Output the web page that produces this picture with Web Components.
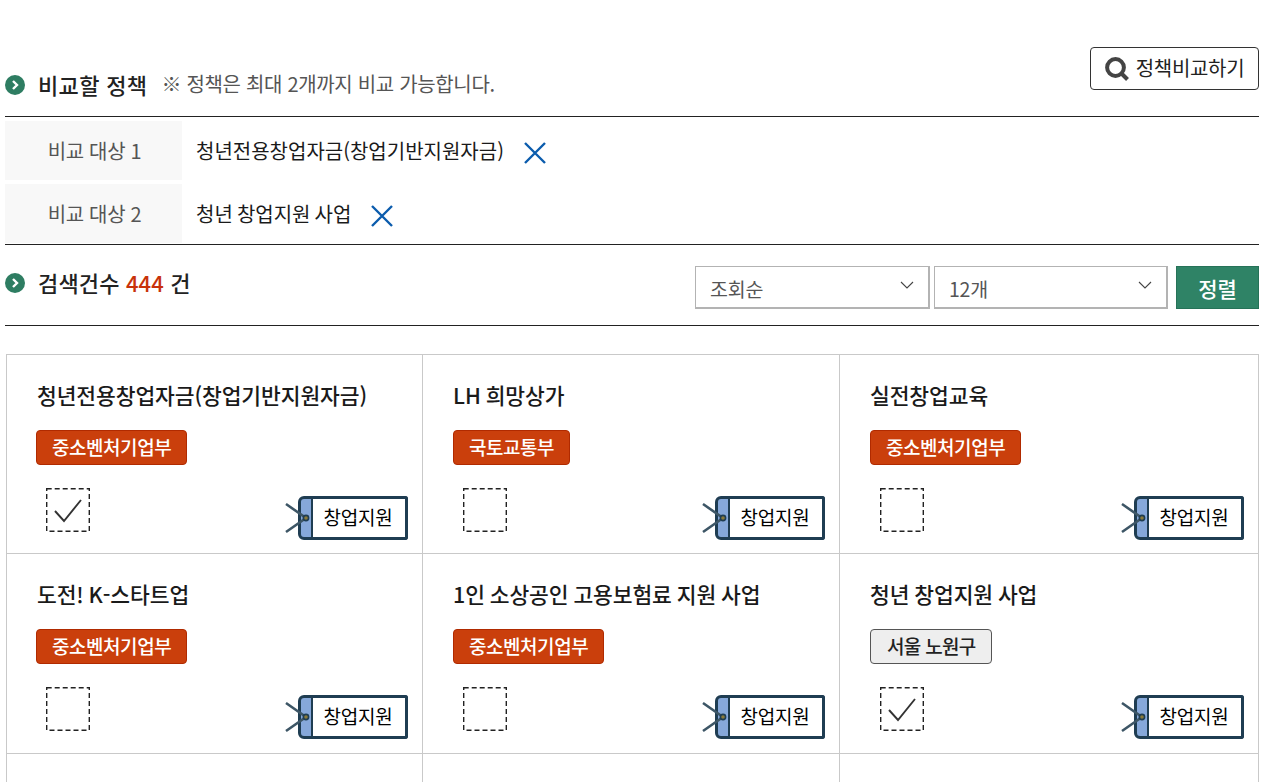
<!DOCTYPE html>
<html lang="ko">
<head>
<meta charset="utf-8">
<title>정책비교</title>
<style>
  html, body { margin: 0; padding: 0; background: #fff; }
  body { font-family: "Noto Sans CJK KR", "Noto Sans", sans-serif; color: #222; }
</style>
</head>
<body>
<template id="t-heading">
  <style>
    :host { display: flex; align-items: center; font-size: 22px; font-weight: 500; color: #222; letter-spacing: 0.35px; line-height: 30px; }
    :host(.count) { letter-spacing: 0.15px; }
    svg { width: 20px; height: 20px; margin-right: 13px; flex: none; }
    span { position: relative; top: -1px; }
  </style>
  <svg viewBox="0 0 20 20"><circle cx="10" cy="10" r="10" fill="#2e7d62"/><path d="M8 6l4 4-4 4" fill="none" stroke="#fff" stroke-width="2.4"/></svg>
  <span><slot></slot></span>
</template>

<template id="t-compare-row">
  <style>
    :host { display: flex; height: 59px; }
    .label { width: 177px; box-sizing: border-box; padding-left: 2px; flex: none; background: #f8f8f8; color: #555; font-size: 20px; display: flex; align-items: center; justify-content: center; letter-spacing: -0.35px; }
    .value { display: flex; align-items: center; padding-left: 14px; font-size: 20px; color: #1a1a1a; word-spacing: -1.5px; }
    svg { width: 24px; height: 24px; margin-left: 19px; margin-top: 5px; }
  </style>
  <div class="label"><slot name="label"></slot></div>
  <div class="value"><slot></slot>
    <svg viewBox="0 0 24 24"><path d="M2 2l20 20M22 2L2 22" stroke="#0b5cad" stroke-width="2.4" fill="none"/></svg>
  </div>
</template>

<template id="t-select">
  <style>
    :host { display: block; box-sizing: border-box; height: 43px; border: 1px solid #b3b3b3; border-bottom-width: 2px; border-right-width: 2px; background: #fff; position: relative; color: #555; font-size: 19.5px; line-height: 43px; padding-left: 14px; letter-spacing: -0.2px; }
    svg { position: absolute; right: 14px; top: 14px; width: 14px; height: 9px; }
  </style>
  <slot></slot>
  <svg viewBox="0 0 14 9"><path d="M1 1l6 6 6-6" fill="none" stroke="#444" stroke-width="1.1"/></svg>
</template>

<template id="t-tag">
  <style>
    :host { display: inline-flex; align-items: stretch; box-sizing: border-box; width: 110px; height: 44px; position: relative; }
    .hole { width: 15px; box-sizing: border-box; background: #86a8da; border: 3px solid #1f3d52; border-right-width: 2px; border-radius: 6px 0 0 6px; flex: none; }
    .text { flex: 1; box-sizing: border-box; border: 3px solid #1f3d52; border-left: 0; border-radius: 0 3px 3px 0; background: #fff; display: flex; align-items: center; justify-content: center; font-size: 19px; font-weight: 400; color: #000; letter-spacing: -0.25px; padding: 0 2px 3px 0; }
    svg { position: absolute; left: -13px; top: 5px; width: 34px; height: 34px; overflow: visible; }
  </style>
  <div class="hole"></div>
  <div class="text"><slot></slot></div>
  <svg viewBox="0 0 34 34"><path d="M1 3l20 14L1 31" fill="none" stroke="#3d5666" stroke-width="2.6"/><circle cx="21" cy="17" r="2.6" fill="#8a7a3a" stroke="#1f3d52" stroke-width="1.6"/></svg>
</template>

<template id="t-card">
  <style>
    :host { display: block; box-sizing: border-box; height: 199.3px; padding: 23px 14px 0 30px; border-right: 1px solid #c9c9c9; border-bottom: 1px solid #c9c9c9; position: relative; }
    :host(:nth-child(3n)) { border-right: 0; }
    .title { font-size: 21.5px; font-weight: 500; line-height: 34px; color: #1a1a1a; letter-spacing: -0.1px; word-spacing: -1px; white-space: nowrap; }
    .org { margin-top: 18px; height: 35px; display: flex; }
    :host(:nth-child(3n+1)) .org { margin-left: -1px; }
    :host(:nth-child(3n)) .org { margin-left: 0; }
    .org span { box-sizing: border-box; height: 35px; display: inline-flex; align-items: center; padding: 0 15px 2px; border-radius: 4px; border: 1px solid #b02a00; background: #ca3f0c; color: #fff; font-size: 19px; font-weight: 500; letter-spacing: -0.45px; }
    :host([local]) .org span { background: #eee; border-color: #555; color: #222; padding: 0 15px 2px 16px; letter-spacing: -0.7px; }
    .foot { display: flex; justify-content: space-between; align-items: flex-start; margin-top: 23px; padding-left: 10px; }
    :host(:nth-child(3n+1)) .foot { padding-left: 9px; }
    .check { width: 44px; height: 44px; box-sizing: border-box; flex: none; }
    .check svg { display: block; width: 44px; height: 44px; }
    .mark { display: none; }
    :host([checked]) .mark { display: inline; }
    resk-tag { margin-top: 8px; }
  </style>
  <div class="title"><slot></slot></div>
  <div class="org"><span><slot name="org"></slot></span></div>
  <div class="foot">
    <div class="check"><svg viewBox="0 0 44 44"><rect x=".7" y=".7" width="42.6" height="42.6" fill="none" stroke="#222" stroke-width="1.4" stroke-dasharray="5 3"/><path class="mark" d="M9 23l9 10 17-21" fill="none" stroke="#333" stroke-width="1.9"/></svg></div>
    <resk-tag>창업지원</resk-tag>
  </div>
</template>

<template id="t-blank">
  <style>
    :host { display: block; box-sizing: border-box; height: 28px; border-right: 1px solid #c9c9c9; }
    :host(:nth-child(3n)) { border-right: 0; }
  </style>
</template>

<template id="t-page">
  <style>
    :host { display: block; margin-left: 5px; width: 1254px; }
    .top { display: flex; justify-content: space-between; align-items: flex-start; padding-top: 47px; height: 69px; border-bottom: 1px solid #222; }
    .title { display: flex; align-items: center; margin-top: 23px; }
    .note { font-size: 20px; font-weight: 400; color: #555; letter-spacing: -0.32px; margin-left: 14px; position: relative; top: -2px; }
    .cmp-btn { box-sizing: border-box; width: 169px; height: 43px; border: 1px solid #333; border-radius: 4px; display: flex; align-items: center; justify-content: center; gap: 7px; font-size: 20px; color: #222; letter-spacing: -0.3px; }
    .cmp-btn span { position: relative; top: -1px; }
    .cmp-btn svg { width: 24px; height: 24px; flex: none; }
    .rows { padding-top: 4px; display: flex; flex-direction: column; gap: 4px; height: 123px; border-bottom: 1px solid #222; }
    .bar { display: flex; justify-content: space-between; align-items: flex-start; height: 80px; border-bottom: 1px solid #222; }
    .count { margin-top: 23px; }
    .count b { font-weight: 500; color: #c8320a; }
    .tools { display: flex; margin-top: 21px; }
    .tools resk-select:nth-child(1) { width: 235px; margin-right: 4px; }
    .tools resk-select:nth-child(2) { width: 234px; margin-right: 8px; }
    .sort { box-sizing: border-box; width: 83px; height: 43px; background: #2f8366; border: 1px solid #267258; color: #fff; font-size: 21px; font-weight: 500; display: flex; align-items: center; justify-content: center; }
    .grid { margin: 28px 0 0 1px; display: grid; grid-template-columns: 416px 417px 1fr; border: 1px solid #c9c9c9; border-bottom: 0; box-sizing: border-box; }
  </style>
  <div class="top">
    <div class="title">
      <resk-heading>비교할 정책</resk-heading>
      <span class="note">※ 정책은 최대 2개까지 비교 가능합니다.</span>
    </div>
    <div class="cmp-btn">
      <svg viewBox="0 0 24 24"><circle cx="10.5" cy="10.5" r="8.4" fill="none" stroke="#444" stroke-width="4"/><path d="M16.5 16.5l6 6" stroke="#444" stroke-width="4" fill="none"/></svg>
      <span>정책비교하기</span>
    </div>
  </div>
  <div class="rows">
    <resk-compare-row><span slot="label">비교 대상 1</span>청년전용창업자금(창업기반지원자금)</resk-compare-row>
    <resk-compare-row><span slot="label">비교 대상 2</span>청년 창업지원 사업</resk-compare-row>
  </div>
  <div class="bar">
    <resk-heading class="count">검색건수 <b>444</b> 건</resk-heading>
    <div class="tools">
      <resk-select>조회순</resk-select>
      <resk-select>12개</resk-select>
      <div class="sort">정렬</div>
    </div>
  </div>
  <div class="grid"><slot></slot></div>
</template>

<resk-page>
  <resk-card checked>청년전용창업자금(창업기반지원자금)<span slot="org">중소벤처기업부</span></resk-card>
  <resk-card>LH 희망상가<span slot="org">국토교통부</span></resk-card>
  <resk-card>실전창업교육<span slot="org">중소벤처기업부</span></resk-card>
  <resk-card>도전! K-스타트업<span slot="org">중소벤처기업부</span></resk-card>
  <resk-card>1인 소상공인 고용보험료 지원 사업<span slot="org">중소벤처기업부</span></resk-card>
  <resk-card checked local>청년 창업지원 사업<span slot="org">서울 노원구</span></resk-card>
  <resk-blank></resk-blank>
  <resk-blank></resk-blank>
  <resk-blank></resk-blank>
</resk-page>

<script>
  // every element just clones its template into an open shadow root
  ['heading', 'compare-row', 'select', 'tag', 'card', 'blank', 'page'].forEach(name => {
    customElements.define('resk-' + name, class extends HTMLElement {
      connectedCallback() {
        if (this.shadowRoot) return;
        this.attachShadow({ mode: 'open' });
        this.shadowRoot.appendChild(document.getElementById('t-' + name).content.cloneNode(true));
      }
    });
  });
</script>
</body>
</html>
